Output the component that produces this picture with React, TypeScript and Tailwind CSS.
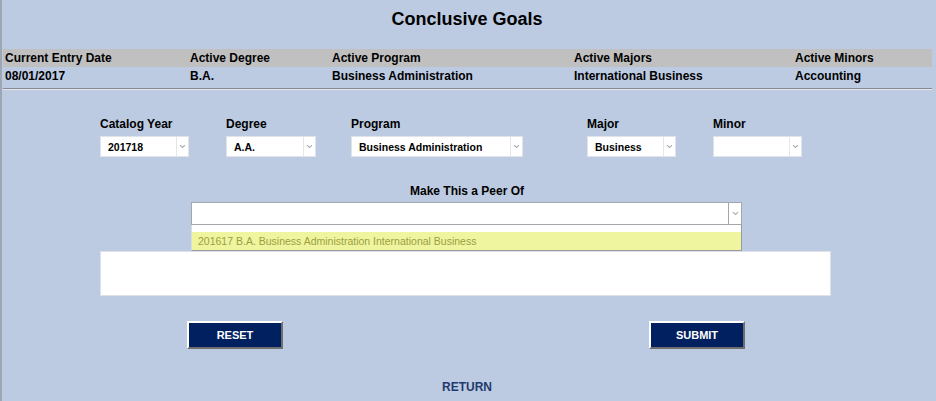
import React from 'react';

const font = { fontFamily: '"Liberation Sans", Arial, sans-serif' };

const Chevron: React.FC = () => (
  <svg width="7" height="5" viewBox="0 0 7 5" fill="none">
    <path d="M1 1.2l2.5 2.3L6 1.2" stroke="#a9adb3" strokeWidth={1.1} />
  </svg>
);

const Select: React.FC<{ value?: string; width: string }> = ({ value, width }) => (
  <div className={`flex h-[21px] ${width} bg-white border border-[#dfe3ea]`}>
    <div className="flex-1 pl-[7px] text-[10.5px] font-bold leading-[20px] text-black truncate">
      {value}
    </div>
    <div className="w-[12px] border-l border-[#e4e6ea] flex items-center justify-center">
      <Chevron />
    </div>
  </div>
);

const headers = ['Current Entry Date', 'Active Degree', 'Active Program', 'Active Majors', 'Active Minors'];
const values = ['08/01/2017', 'B.A.', 'Business Administration', 'International Business', 'Accounting'];

const fields = [
  { label: 'Catalog Year', value: '201718', col: 'w-[126px]', width: 'w-[89px]' },
  { label: 'Degree', value: 'A.A.', col: 'w-[125px]', width: 'w-[90px]' },
  { label: 'Program', value: 'Business Administration', col: 'w-[236px]', width: 'w-[172px]' },
  { label: 'Major', value: 'Business', col: 'w-[126px]', width: 'w-[89px]' },
  { label: 'Minor', value: '', col: 'w-[90px]', width: 'w-[89px]' },
];

const App: React.FC = () => {
  return (
    <div className="w-[936px] h-[401px] bg-[#bccbe2] border-l-2 border-[#9ea7b4] text-black overflow-hidden" style={font}>
      {/* Title */}
      <h1 className="pt-[9px] pr-[4px] text-center text-[18px] font-bold leading-[21px]">Conclusive Goals</h1>

      {/* Active summary */}
      <div className="mt-[19px] ml-[1px] mr-[4px]">
        <div className="grid grid-cols-[185px_142px_242px_221px_1fr] h-[18px] bg-[#c0c0c0] pl-[2px] text-[12px] font-bold leading-[18px]">
          {headers.map((h) => (
            <div key={h}>{h}</div>
          ))}
        </div>
        <div className="grid grid-cols-[185px_142px_242px_221px_1fr] h-[18px] pl-[2px] text-[12px] font-bold leading-[18px]">
          {values.map((v) => (
            <div key={v}>{v}</div>
          ))}
        </div>
        <div className="mt-[3px] border-t border-b border-t-[#868b93] border-b-[#e4e8ee]" />
      </div>

      {/* Goal selects */}
      <div className="mt-[27px] pl-[98px] flex">
        {fields.map((f) => (
          <div key={f.label} className={f.col}>
            <div className="text-[12px] font-bold leading-[14px]">{f.label}</div>
            <div className="mt-[5px]">
              <Select value={f.value} width={f.width} />
            </div>
          </div>
        ))}
      </div>

      {/* Peer */}
      <div className="mt-[27px] pr-[4px] text-center text-[12px] font-bold leading-[14px]">Make This a Peer Of</div>
      <div className="relative mt-[4px] ml-[189px] w-[551px]">
        <div className="flex h-[23px] bg-white border border-[#a3a6ab]">
          <div className="flex-1" />
          <div className="w-[13px] border-l border-[#a3a6ab] flex items-center justify-center">
            <Chevron />
          </div>
        </div>
        <div className="absolute left-0 top-full w-[551px] z-10 border-l border-r border-b border-l-[#d8dbe0] border-r-[#9a9a9a] border-b-[#9a9a9a] bg-white">
          <div className="h-[7px]" />
          <div className="h-[18px] bg-[#eff49f] pl-[6px] text-[10.5px] leading-[18px] text-[#9c9e3e]">
            201617 B.A. Business Administration International Business
          </div>
        </div>
      </div>

      {/* Notes */}
      <div className="mt-[26px] ml-[98px] w-[731px] h-[45px] bg-white border border-[#dde1e8]" />

      {/* Actions */}
      <div className="mt-[25px] ml-[185px] flex gap-[366px]">
        <button className="w-[96px] h-[28px] bg-[#002060] border-2 border-t-white border-l-white border-b-[#6e6e6e] border-r-[#6e6e6e] text-white text-[11px] font-bold">
          RESET
        </button>
        <button className="w-[96px] h-[28px] bg-[#002060] border-2 border-t-white border-l-white border-b-[#6e6e6e] border-r-[#6e6e6e] text-white text-[11px] font-bold">
          SUBMIT
        </button>
      </div>

      <div className="mt-[31px] pr-[4px] text-center text-[12px] font-bold leading-[14px] text-[#1f3a6e]">RETURN</div>
    </div>
  );
};

export default App;
